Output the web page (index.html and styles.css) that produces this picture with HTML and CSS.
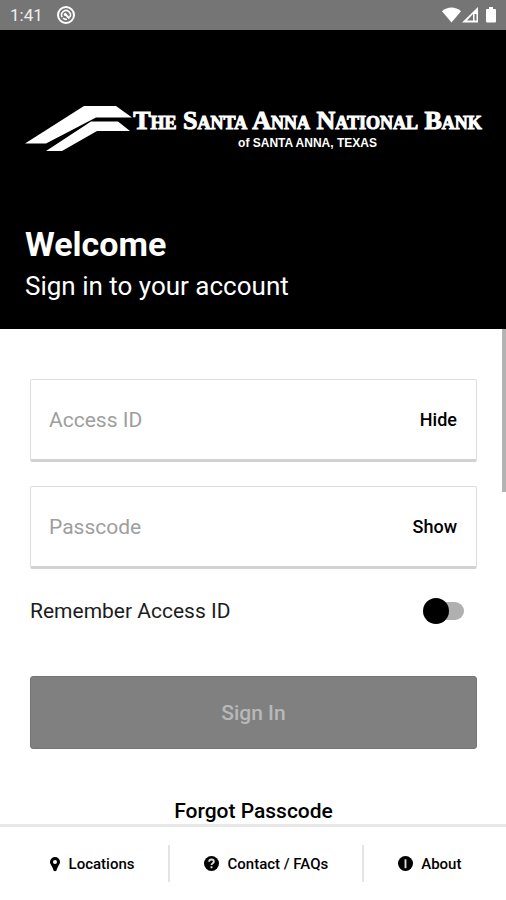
FILE: index.html
```html
<!DOCTYPE html>
<html lang="en">
<head>
<meta charset="utf-8">
<meta name="viewport" content="width=device-width, initial-scale=1">
<title>Sign in - The Santa Anna National Bank</title>
<link rel="stylesheet" href="styles.css">
</head>
<body>
<div class="screen">
  <div class="status">
    <span class="clock">1:41</span>
    <svg class="notice" width="18" height="18" viewBox="0 0 18 18" fill="none" stroke="currentColor" aria-hidden="true">
      <circle cx="9" cy="9" r="8" stroke-width="2"/>
      <path d="M5.2 11.2A4.4 4.4 0 1 1 12.8 11.2M6 12.2A4.4 4.4 0 0 0 10 13.3" stroke-width="1.6"/>
      <path d="M7.500 7.500 12.5 12.500" stroke-width="2"/>
      <circle cx="8.3" cy="8.5" r="1.5" fill="currentColor" stroke="none"/>
    </svg>
    <svg class="signals" width="56" height="18" viewBox="0 0 56 18" fill="currentColor" aria-hidden="true">
      <path d="M0 5.2C5.5.4 13.500.4 19 5.200L9.500 16.500Z"/>
      <path fill-rule="evenodd" d="M20 16.500 36 1V16.500ZM31 8 25 14.500H31ZM32.500 8V14.500H34.500V8Z"/>
      <path d="M47 1h4v2h2q1 0 1 1v11.500q0 1-1 1h-8q-1 0-1-1V4q0-1 1-1h2Z"/>
    </svg>
  </div>
  <header class="hero">
    <div class="brand">
      <svg class="mark" width="108" height="48" viewBox="0 0 108 48" fill="currentColor" aria-hidden="true">
        <path d="M0 39.500 59 2H91L107 13.500H71L21 39.500Z"/>
        <path d="M21 47 66 17.500H93L105 27H72L37 47Z"/>
      </svg>
      <div class="wordmark">
        <div class="bank">The Santa Anna National Bank</div>
        <div class="place">of SANTA ANNA, TEXAS</div>
      </div>
    </div>
    <h1>Welcome</h1>
    <p>Sign in to your account</p>
  </header>
  <main>
    <div class="thumb"></div>
    <form>
      <div class="field">
        <input type="text" placeholder="Access ID" aria-label="Access ID">
        <button type="button">Hide</button>
      </div>
      <div class="field">
        <input type="password" placeholder="Passcode" aria-label="Passcode">
        <button type="button">Show</button>
      </div>
      <div class="remember">
        <label for="remember">Remember Access ID</label>
        <input id="remember" type="checkbox" role="switch">
      </div>
      <button class="submit" type="submit" disabled>Sign In</button>
      <a class="forgot" href="#forgot">Forgot Passcode</a>
    </form>
  </main>
  <nav>
    <a href="#locations">
      <svg width="12" height="16" viewBox="-1 0 12 16" fill="currentColor" aria-hidden="true"><path fill-rule="evenodd" d="M5 1a5 5 0 0 1 5 5c0 2.500-2.500 4-3.500 8.500q-1.500 1.500-3 0C2.500 10 0 8.500 0 6a5 5 0 0 1 5-5Zm0 3a2 2 0 1 0 0 4 2 2 0 0 0 0-4Z"/></svg>
      Locations
    </a>
    <a href="#contact">
      <svg width="15" height="15" viewBox="0 0 16 16" aria-hidden="true"><circle cx="8" cy="8" r="8"/><path d="M5.500 6C5.500 3 10.500 3 10.500 6 10.500 7.800 8 7.600 8 9.600M8 11v2" fill="none" stroke="#ddd" stroke-width="2"/></svg>
      Contact / FAQs
    </a>
    <a href="#about">
      <svg width="15" height="15" viewBox="0 0 16 16" aria-hidden="true"><circle cx="8" cy="8" r="8"/><path d="M8 3.500v9.500" fill="none" stroke="#ddd" stroke-width="2"/></svg>
      About
    </a>
  </nav>
</div>
</body>
</html>
```

FILE: styles.css
```css
* { box-sizing: border-box; }

body {
  margin: 0;
  background: #fff;
  color: #000;
  font-family: Roboto, sans-serif;
}

.screen {
  display: flex;
  flex-direction: column;
  height: 100vh;
}

.status {
  display: flex;
  align-items: center;
  flex: none;
  height: 30px;
  padding: 0 8px 0 10px;
  background: #757575;
  color: #fff;
  font-size: 17px;
}

.clock { color: #eee; }
.notice { margin-left: 14px; }
.signals { margin-left: auto; }

.hero {
  flex: none;
  padding: 74px 24px 25px 25px;
  background: #000;
  color: #fff;
}

.brand {
  display: flex;
  align-items: flex-start;
}

.mark { flex: none; }

.wordmark {
  flex: 1;
  text-align: center;
  white-space: nowrap;
}

.bank {
  font: bold 26px/34px "Liberation Serif", serif;
  font-variant-caps: small-caps;
  -webkit-text-stroke: 1px #fff;
}

.place {
  font: bold 12px/10px "Liberation Sans", sans-serif;
}

h1 {
  margin: 72px 0 0;
  font-size: 34px;
  line-height: 40px;
}

.hero p {
  margin: 4px 0 0;
  font-size: 26px;
  line-height: 36px;
}

main {
  position: relative;
  flex: 1;
  min-height: 0;
  overflow: hidden;
  padding: 50px 29px 0 30px;
}

.thumb {
  position: absolute;
  top: 0;
  right: 0;
  width: 4px;
  height: 33%;
  background: #b3b3b3;
}

form {
  display: flex;
  flex-direction: column;
}

.field {
  display: flex;
  height: 83px;
  margin-bottom: 24px;
  padding: 0 19px 0 18px;
  border: 1px solid #ddd;
  border-bottom: 3px solid #d2d2d2;
  border-radius: 2px;
}

.field input {
  flex: 1;
  min-width: 0;
  padding: 0;
  border: 0;
  outline: 0;
  background: none;
  font: 21px Roboto, sans-serif;
}

.field input::placeholder { color: #9e9e9e; }

.field button {
  padding: 0;
  border: 0;
  background: none;
  color: #000;
  font: 500 18px Roboto, sans-serif;
}

.remember {
  display: flex;
  align-items: center;
  justify-content: space-between;
  height: 36px;
  padding-right: 13px;
  color: #1c1c1c;
  font-size: 21px;
}

.remember input {
  appearance: none;
  display: flex;
  align-items: center;
  width: 41px;
  height: 26px;
  margin: 0;
}

.remember input::before {
  content: "";
  z-index: 1;
  flex: none;
  width: 26px;
  height: 26px;
  border-radius: 50%;
  background: #000;
}

.remember input::after {
  content: "";
  flex: none;
  width: 30px;
  height: 18px;
  margin-left: -15px;
  border-radius: 9px;
  background: #b0b0b0;
}

.remember input:checked { flex-direction: row-reverse; }
.remember input:checked::after { margin: 0 -15px 0 0; }

.submit {
  height: 73px;
  margin-top: 47px;
  border: 1px solid #757575;
  border-radius: 3px;
  background: #808080;
  color: #b8b8b8;
  font: 500 21px Roboto, sans-serif;
}

.forgot {
  align-self: center;
  margin-top: 48px;
  font-size: 21px;
  font-weight: 500;
  line-height: 28px;
}

a {
  color: #000;
  text-decoration: none;
}

nav {
  display: flex;
  justify-content: center;
  flex: none;
  padding: 18px 0 18px 4px;
  border-top: 3px solid #e8e8e8;
}

nav a {
  display: flex;
  align-items: center;
  gap: 8px;
  height: 37px;
  padding: 0 34px;
  font-size: 15px;
  font-weight: 500;
}

nav a + a { border-left: 2px solid #e4e4e4; }
```
